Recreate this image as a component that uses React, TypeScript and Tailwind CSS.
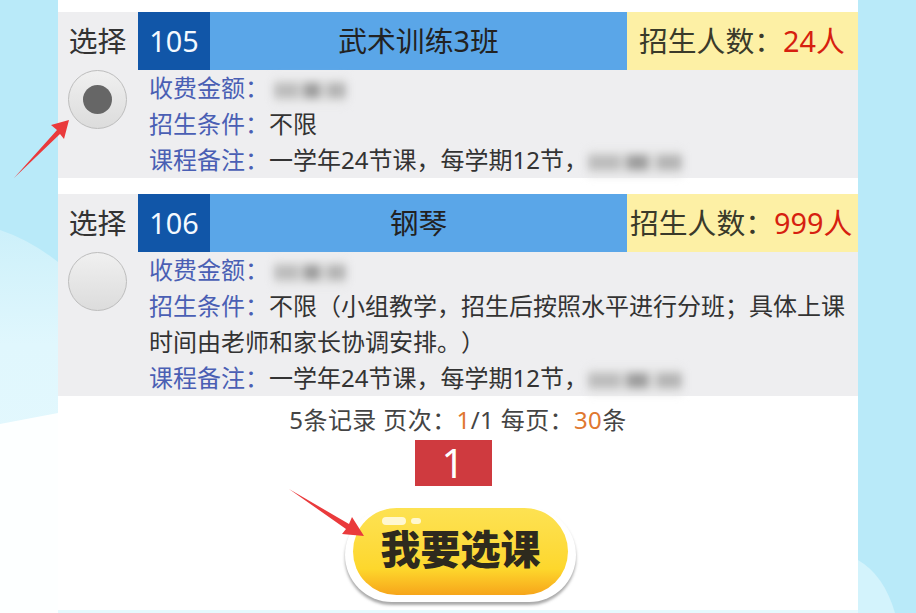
const font = 'font-["Noto_Sans","Noto_Sans_CJK_SC",sans-serif]'

function Blur({ w, ml = '' }: { w: string; ml?: string }) {
  return (
    <span className={`inline-flex h-[26px] items-center bg-[#e6e6e6] align-middle blur-[4px] ${w} ${ml}`}>
      <span className="h-[15px] w-[34%] bg-[#bcbcbc]" />
      <span className="h-[15px] w-[8%] bg-[#d6d6d6]" />
      <span className="h-[15px] w-[22%] bg-[#9c9c9c]" />
      <span className="h-[15px] w-[10%] bg-[#dcdcdc]" />
      <span className="h-[15px] w-[26%] bg-[#b4b4b4]" />
    </span>
  )
}

function Radio({ checked }: { checked?: boolean }) {
  return (
    <div className="flex h-[59px] w-[59px] items-center justify-center rounded-full border border-[#bdbdbd] bg-gradient-to-b from-[#f0f0f0] to-[#dcdcdc]">
      {checked && <div className="h-[29px] w-[29px] rounded-full bg-[#666666]" />}
    </div>
  )
}

function Course({ num, name, count, checked, cond, countPad }: {
  num: string
  name: string
  count: string
  checked?: boolean
  cond: string
  countPad: string
}) {
  return (
    <div className="flex bg-[#eeeef0]">
      <div className="flex w-[80px] shrink-0 flex-col items-center pr-[1px]">
        <div className="flex h-[58px] items-center text-[28.8px] text-[#333333]">选择</div>
        <Radio checked={checked} />
      </div>
      <div className="min-w-0 flex-1">
        <div className="flex h-[58px] items-stretch text-[28.8px]">
          <div className="flex w-[72px] items-center justify-center bg-[#1156a8] text-[#f4f9ff]">{num}</div>
          <div className="flex w-[417px] items-center justify-center bg-[#5aa6e8] text-[#222222]">{name}</div>
          <div className={`flex flex-1 items-center whitespace-nowrap bg-[#fdf0a5] text-[#3a3a2a] ${countPad}`}>
            招生人数：<span className="text-[#d6200f]">{count}</span>
          </div>
        </div>
        <div className="pl-[11px] pr-1 leading-[36px] text-[#333333]">
          <div className="h-[36px]">
            <span className="text-[#4a5fb4]">收费金额：</span>
            <Blur w="w-[72px]" ml="ml-[5px]" />
          </div>
          <div>
            <span className="text-[#4a5fb4]">招生条件：</span>{cond}
          </div>
          <div className="h-[36px] whitespace-nowrap">
            <span className="text-[#4a5fb4]">课程备注：</span>一学年24节课，每学期12节，
            <Blur w="w-[94px]" />
          </div>
        </div>
      </div>
    </div>
  )
}

export default function App() {
  return (
    <div className={`relative h-[613px] w-[916px] overflow-hidden bg-[#b9eaf9] text-[24px] [text-spacing-trim:space-all] ${font}`}>
      {/* background shapes */}
      <svg className="absolute inset-0" width="916" height="613" viewBox="0 0 916 613">
        <defs>
          <linearGradient id="bgA" x1="0" y1="0" x2="0" y2="1">
            <stop offset="0" stopColor="#cdf0fa" />
            <stop offset="0.3" stopColor="#e0f7fd" />
            <stop offset="1" stopColor="#e6f9fe" />
          </linearGradient>
        </defs>
        <path d="M0 230 Q30 240 58 262 L58 613 L0 613 Z" fill="url(#bgA)" />
        <path d="M0 424 L58 413 L58 613 L0 613 Z" fill="#fdffff" />
        <path d="M858 560 Q884 575 895 613 L858 613 Z" fill="#d3f3fc" />
        <rect x="58" y="608" width="800" height="5" fill="#e6f9fd" />
      </svg>

      <div className="relative mx-[58px] flex h-[610px] w-[800px] flex-col bg-white pt-3">
        <Course num="105" name="武术训练3班" count="24人" cond="不限" checked countPad="pl-3" />
        <div className="h-4 shrink-0" />
        <Course
          num="106"
          name="钢琴"
          count="999人"
          cond="不限（小组教学，招生后按照水平进行分班；具体上课时间由老师和家长协调安排。）"
          countPad="pl-[3px]"
        />

        <div className="flex h-[44px] shrink-0 items-center justify-center pt-[3px] tracking-[0.4px] text-[#444444]">
          5条记录 页次：<span className="text-[#e07830]">1</span>/1 每页：<span className="text-[#e07830]">30</span>条
        </div>
        <div className="flex justify-center pr-[10px]">
          <div className="flex h-[46px] w-[77px] items-center justify-center bg-[#cf3a3f] text-[40px] text-white">1</div>
        </div>
        <div className="mt-[22px] flex justify-center pl-[5px]">
          <div className="rounded-full bg-white px-[8px] pb-[7px] shadow-[0_3px_3px_rgba(110,110,110,0.6)]">
            <div className="relative flex h-[87px] w-[215px] items-center justify-center rounded-full bg-gradient-to-b from-[#fde252] via-[#fdd72c] via-70% to-[#f6a51a] pb-[5px] text-[40px] font-black text-[#2e2a1e]">
              我要选课
              <span className="absolute left-[29px] top-[9px] h-[8px] w-[24px] rounded-full bg-[#fff8d0]" />
              <span className="absolute left-[58px] top-[10px] h-[6px] w-[10px] rounded-full bg-[#fff8d0]" />
            </div>
          </div>
        </div>
      </div>

      {/* annotation arrows */}
      <svg className="absolute inset-0" width="916" height="613" viewBox="0 0 916 613" fill="#ea3a3c">
        <path d="M14 178 L57 130 L51 125 L69 120 L64 139 L60 134 Z" />
        <path d="M289 489 L349 524 L352 517 L364 536 L342 534 L346 529 Z" />
      </svg>
    </div>
  )
}
